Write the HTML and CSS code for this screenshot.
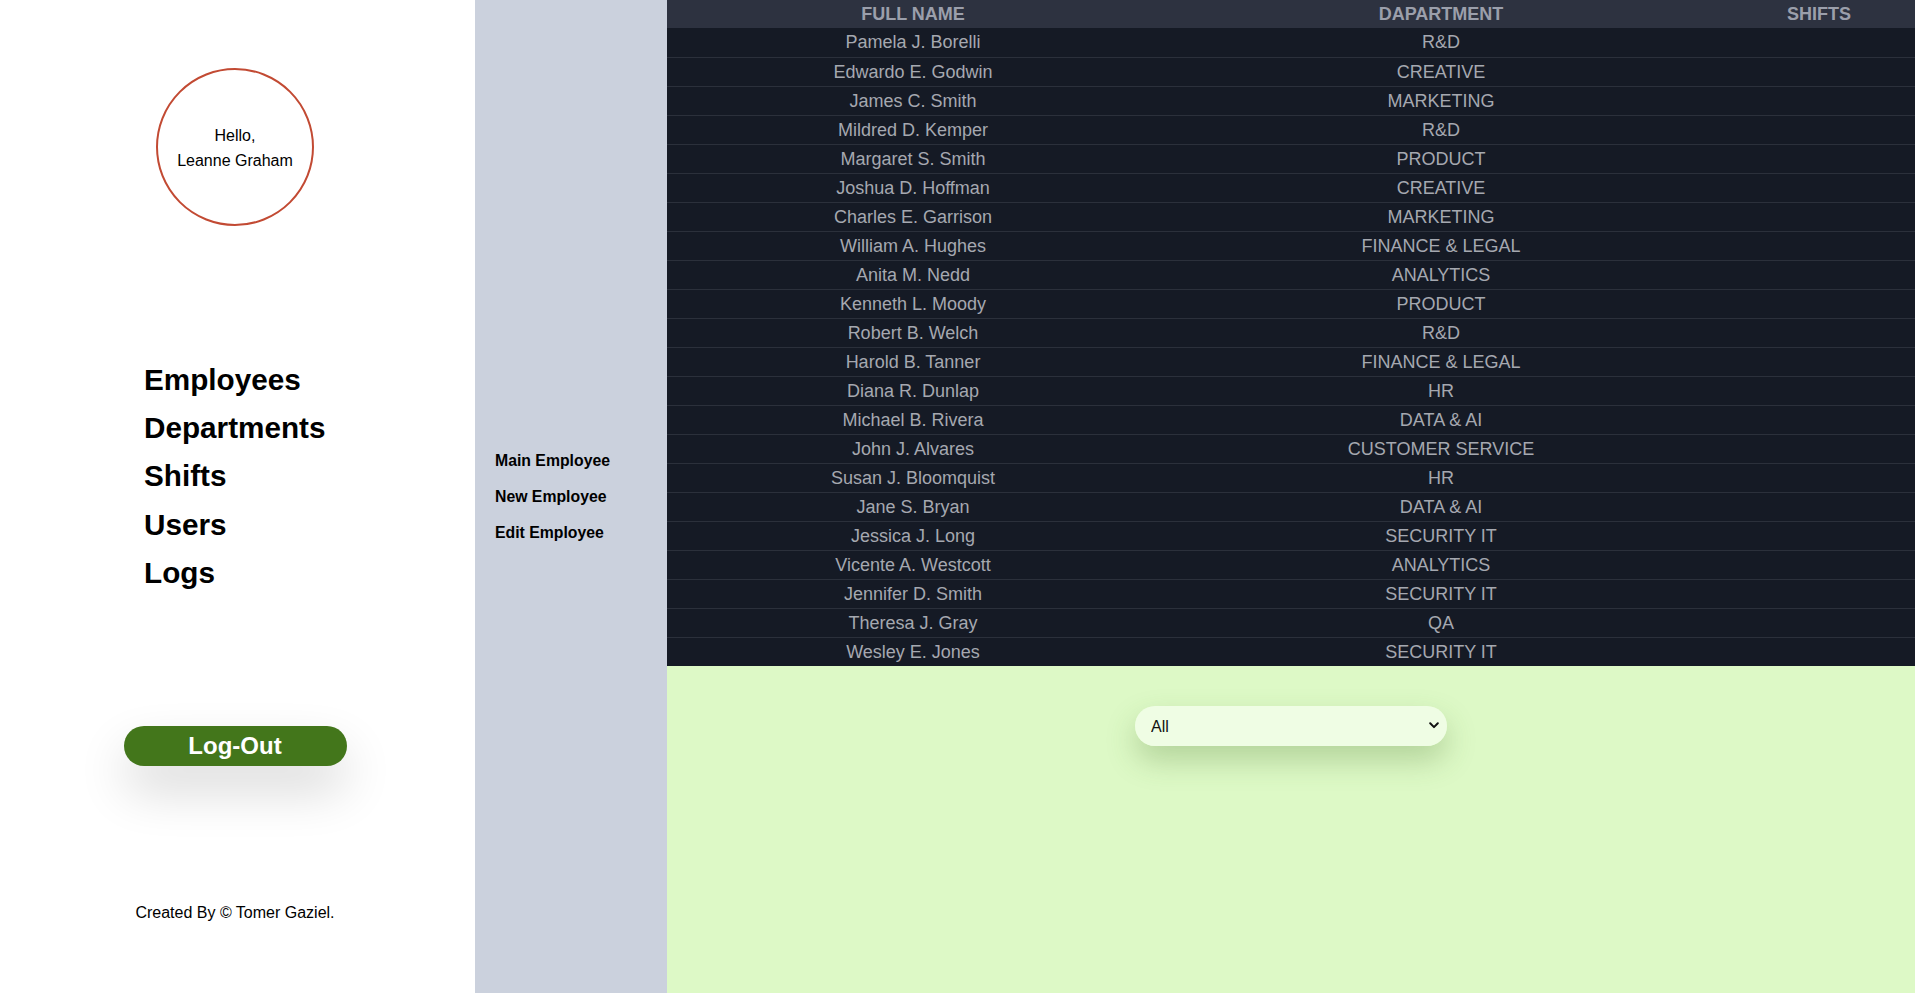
FILE: index.html
```html
<!DOCTYPE html>
<html lang="en">
<head>
<meta charset="utf-8">
<title>Employees</title>
<link rel="stylesheet" href="styles.css">
</head>
<body>
<div class="app">
  <aside class="sidebar">
    <div class="greeting">
      <span>Hello,</span>
      <span>Leanne Graham</span>
    </div>
    <nav class="main-nav">
      <a href="#">Employees</a>
      <a href="#">Departments</a>
      <a href="#">Shifts</a>
      <a href="#">Users</a>
      <a href="#">Logs</a>
    </nav>
    <button class="logout">Log-Out</button>
    <footer class="credit">Created By © Tomer Gaziel.</footer>
  </aside>
  <nav class="sub-nav">
    <a href="#">Main Employee</a>
    <a href="#">New Employee</a>
    <a href="#">Edit Employee</a>
  </nav>
  <main class="content">
    <table class="emp-table">
      <colgroup>
        <col class="c-name">
        <col class="c-dept">
        <col class="c-shift">
      </colgroup>
      <thead>
        <tr><th>FULL NAME</th><th>DAPARTMENT</th><th>SHIFTS</th></tr>
      </thead>
      <tbody>
        <tr><td>Pamela J. Borelli</td><td>R&amp;D</td><td></td></tr>
        <tr><td>Edwardo E. Godwin</td><td>CREATIVE</td><td></td></tr>
        <tr><td>James C. Smith</td><td>MARKETING</td><td></td></tr>
        <tr><td>Mildred D. Kemper</td><td>R&amp;D</td><td></td></tr>
        <tr><td>Margaret S. Smith</td><td>PRODUCT</td><td></td></tr>
        <tr><td>Joshua D. Hoffman</td><td>CREATIVE</td><td></td></tr>
        <tr><td>Charles E. Garrison</td><td>MARKETING</td><td></td></tr>
        <tr><td>William A. Hughes</td><td>FINANCE &amp; LEGAL</td><td></td></tr>
        <tr><td>Anita M. Nedd</td><td>ANALYTICS</td><td></td></tr>
        <tr><td>Kenneth L. Moody</td><td>PRODUCT</td><td></td></tr>
        <tr><td>Robert B. Welch</td><td>R&amp;D</td><td></td></tr>
        <tr><td>Harold B. Tanner</td><td>FINANCE &amp; LEGAL</td><td></td></tr>
        <tr><td>Diana R. Dunlap</td><td>HR</td><td></td></tr>
        <tr><td>Michael B. Rivera</td><td>DATA &amp; AI</td><td></td></tr>
        <tr><td>John J. Alvares</td><td>CUSTOMER SERVICE</td><td></td></tr>
        <tr><td>Susan J. Bloomquist</td><td>HR</td><td></td></tr>
        <tr><td>Jane S. Bryan</td><td>DATA &amp; AI</td><td></td></tr>
        <tr><td>Jessica J. Long</td><td>SECURITY IT</td><td></td></tr>
        <tr><td>Vicente A. Westcott</td><td>ANALYTICS</td><td></td></tr>
        <tr><td>Jennifer D. Smith</td><td>SECURITY IT</td><td></td></tr>
        <tr><td>Theresa J. Gray</td><td>QA</td><td></td></tr>
        <tr><td>Wesley E. Jones</td><td>SECURITY IT</td><td></td></tr>
      </tbody>
    </table>
    <section class="filter-area">
      <div class="select-wrap">
        <select class="dept-select">
          <option>All</option>
        </select>
        <svg class="chev" width="10" height="7" viewBox="0 0 10 7" aria-hidden="true">
          <path d="M1.2 1.3 L5 5.1 L8.8 1.3" fill="none" stroke="#111" stroke-width="2" stroke-linecap="round" stroke-linejoin="round"/>
        </svg>
      </div>
    </section>
  </main>
</div>
</body>
</html>
```

FILE: styles.css
```css
* { box-sizing: border-box; }

html, body {
  margin: 0;
  padding: 0;
  height: 100%;
}

body {
  font-family: "Liberation Sans", Arial, Helvetica, sans-serif;
  font-size: 16px;
  color: #000;
  background: #fff;
}

.app {
  display: flex;
  height: 993px;
  overflow: hidden;
}

/* ---------- left sidebar ---------- */
.sidebar {
  width: 475px;
  flex: 0 0 475px;
  padding-right: 5px;
  background: #fff;
  display: flex;
  flex-direction: column;
  align-items: center;
}

.greeting {
  margin-top: 68px;
  width: 158px;
  height: 158px;
  border: 2px solid #c24a33;
  border-radius: 50%;
  display: flex;
  flex-direction: column;
  align-items: center;
  justify-content: center;
  line-height: 24.5px;
  font-size: 16px;
  padding-top: 3px;
}

.main-nav {
  align-self: flex-start;
  margin-left: 144px;
  margin-top: 130px;
  display: flex;
  flex-direction: column;
}

.main-nav a {
  color: #000;
  text-decoration: none;
  font-weight: bold;
  font-size: 29.7px;
  line-height: 48.2px;
}

.logout {
  margin-top: 129px;
  width: 223px;
  height: 40px;
  border: none;
  border-radius: 20px;
  background: #43761b;
  color: #fff;
  font-family: inherit;
  font-weight: bold;
  font-size: 24px;
  line-height: 40px;
  padding: 0;
  box-shadow: 0 24px 50px rgba(0, 0, 0, 0.16);
}

.credit {
  margin-top: 137px;
  font-size: 16px;
  line-height: 20px;
}

/* ---------- sub nav ---------- */
.sub-nav {
  width: 192px;
  flex: 0 0 192px;
  background: #cbd1dd;
  display: flex;
  flex-direction: column;
  justify-content: center;
  padding-left: 20px;
}

.sub-nav a {
  color: #000;
  text-decoration: none;
  font-weight: bold;
  font-size: 15.8px;
  line-height: 36px;
}

/* ---------- main content ---------- */
.content {
  flex: 1;
  display: flex;
  flex-direction: column;
  min-width: 0;
}

.emp-table {
  width: 100%;
  border-collapse: collapse;
  table-layout: fixed;
  background: #151a25;
  color: #a5a8b0;
}

.c-name { width: 492px; }
.c-dept { width: 564px; }
.c-shift { width: 192px; }

.emp-table th {
  background: #2d3240;
  color: #9b9fab;
  font-weight: bold;
  font-size: 18px;
  height: 28px;
  line-height: 20px;
  padding: 0;
  text-align: center;
}

.emp-table td {
  height: 29px;
  padding: 0;
  text-align: center;
  font-size: 18px;
  line-height: 20px;
  border-bottom: 1px solid #2b303b;
}

.emp-table tbody tr:last-child td {
  border-bottom: none;
}

.filter-area {
  flex: 1;
  background: #ddf9c6;
  display: flex;
  justify-content: center;
  align-items: flex-start;
  padding-top: 40px;
}

.select-wrap {
  position: relative;
  width: 312px;
  height: 40px;
  border-radius: 20px;
  box-shadow: 0 14px 30px rgba(70, 110, 40, 0.28);
}

.dept-select {
  appearance: none;
  -webkit-appearance: none;
  width: 100%;
  height: 100%;
  border: none;
  border-radius: 20px;
  background: #effde4;
  font-family: inherit;
  font-size: 16px;
  color: #111;
  padding: 0 30px 0 16px;
  outline: none;
}

.chev {
  position: absolute;
  right: 8px;
  top: 16px;
  pointer-events: none;
}
```
